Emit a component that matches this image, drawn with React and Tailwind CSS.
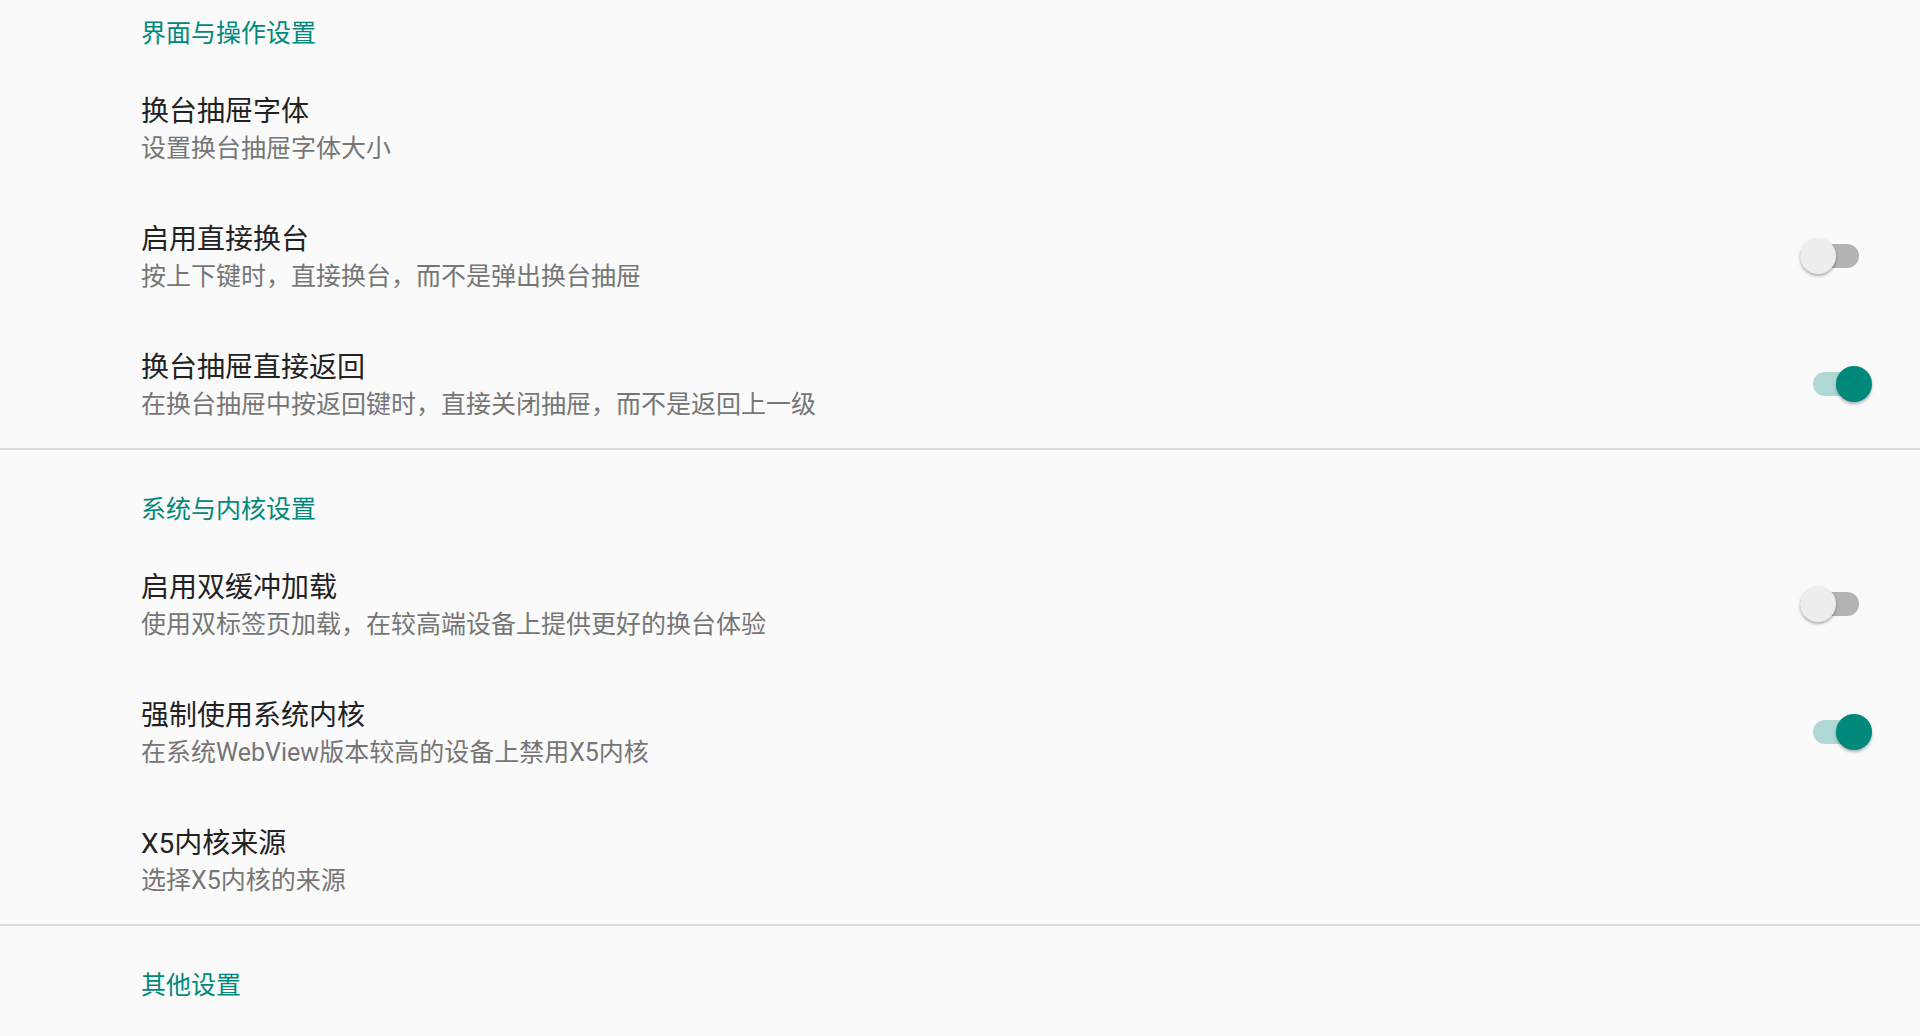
import React from 'react';

const sections = [
  {
    title: '界面与操作设置',
    items: [
      { title: '换台抽屉字体', summary: '设置换台抽屉字体大小' },
      { title: '启用直接换台', summary: '按上下键时，直接换台，而不是弹出换台抽屉', toggle: false },
      { title: '换台抽屉直接返回', summary: '在换台抽屉中按返回键时，直接关闭抽屉，而不是返回上一级', toggle: true },
    ],
  },
  {
    title: '系统与内核设置',
    items: [
      { title: '启用双缓冲加载', summary: '使用双标签页加载，在较高端设备上提供更好的换台体验', toggle: false },
      { title: '强制使用系统内核', summary: '在系统WebView版本较高的设备上禁用X5内核', toggle: true },
      { title: 'X5内核来源', summary: '选择X5内核的来源' },
    ],
  },
  {
    title: '其他设置',
    items: [],
  },
];

function Switch({ on }) {
  return (
    <div className="relative w-[72px] h-[36px]">
      <div
        className={
          on
            ? 'absolute left-[13px] top-[6px] w-[59px] h-[24px] rounded-full bg-[#afd8d4]'
            : 'absolute left-0 top-[6px] w-[59px] h-[24px] rounded-full bg-[#b3b3b3]'
        }
      />
      <div
        className={
          on
            ? 'absolute left-[36px] top-0 w-[36px] h-[36px] rounded-full bg-[#00897b] shadow-[0_2px_3px_rgba(0,0,0,0.3)]'
            : 'absolute left-0 top-0 w-[36px] h-[36px] rounded-full bg-[#ededed] shadow-[0_2px_3px_rgba(0,0,0,0.3)]'
        }
      />
    </div>
  );
}

function PrefRow({ item }) {
  return (
    <div className="flex h-[128px] pl-[141px] pr-[48px]">
      <div className="flex-1 pt-[29px]">
        <div className="text-[28px] leading-[38px] text-[#222222]">{item.title}</div>
        <div className="text-[25px] leading-[36px] text-[#767676]">{item.summary}</div>
      </div>
      {item.toggle !== undefined && (
        <div className="self-center">
          <Switch on={item.toggle} />
        </div>
      )}
    </div>
  );
}

export default function App() {
  return (
    <div
      lang="zh-CN"
      className="min-h-screen bg-[#fafafa] font-['Roboto','Noto_Sans_CJK_SC',sans-serif] overflow-hidden"
    >
      {sections.map((section, i) => (
        <div key={section.title}>
          {i > 0 && <div className="h-[2px] bg-[#dcdcdc]" />}
          <div
            className={
              i === 0
                ? 'h-[64px] pl-[141px] pt-[17px] text-[25px] leading-[34px] text-[#00897b]'
                : 'h-[90px] pl-[141px] pt-[43px] text-[25px] leading-[34px] text-[#00897b]'
            }
          >
            {section.title}
          </div>
          {section.items.map((item) => (
            <PrefRow key={item.title} item={item} />
          ))}
        </div>
      ))}
    </div>
  );
}
